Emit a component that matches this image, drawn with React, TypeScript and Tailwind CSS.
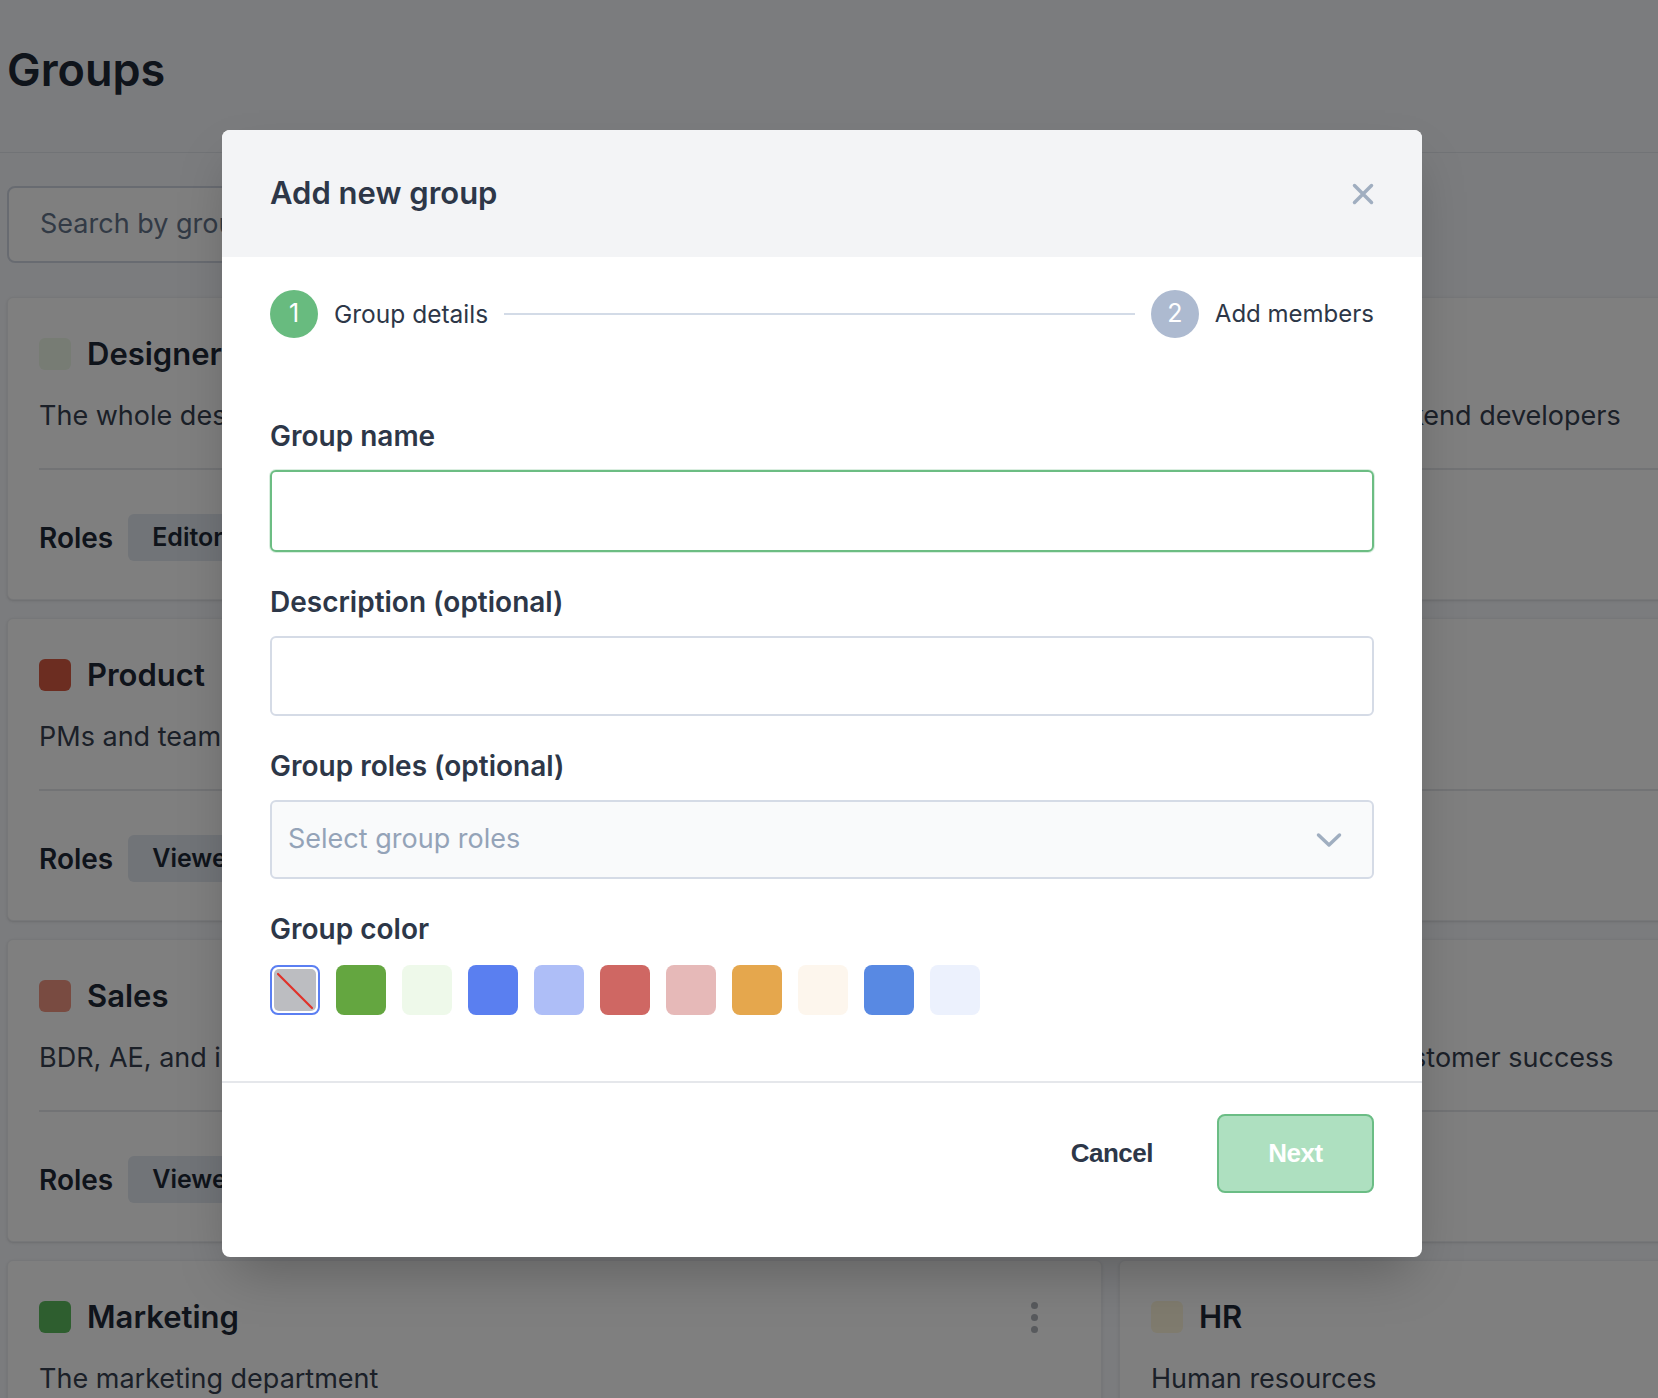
import React from "react";

type Card = {
  title: string;
  desc: string;
  color: string;
  role?: string;
};

const left: Card[] = [
  { title: "Designers", desc: "The whole design team", color: "bg-[#eef9e8]", role: "Editor" },
  { title: "Product", desc: "PMs and team leads", color: "bg-[#d85a42]", role: "Viewer" },
  { title: "Sales", desc: "BDR, AE, and inside sales", color: "bg-[#f29682]", role: "Viewer" },
  { title: "Marketing", desc: "The marketing department", color: "bg-[#5cbc5e]", role: "Viewer" },
];

const right: Card[] = [
  { title: "Engineering", desc: "All frontend and backend developers", color: "bg-[#aebef7]", role: "Admin" },
  { title: "Design ops", desc: "Tooling", color: "bg-[#e5a74d]", role: "Viewer" },
  { title: "Support", desc: "Support staff and customer success", color: "bg-[#5889e3]", role: "Viewer" },
  { title: "HR", desc: "Human resources", color: "bg-[#fff6dc]", role: "Viewer" },
];

function GroupCard({ c }: { c: Card }) {
  return (
    <div className="h-[303px] rounded-md border border-[#eceef2] bg-white pl-[31px] shadow-sm">
      <div className="flex items-center pt-[40px]">
        <div className={`h-[32px] w-[32px] rounded-md ${c.color}`} />
        <div className="ml-[16px] flex-1 text-[31px] font-semibold leading-[32px] text-[#1f2937]">{c.title}</div>
        <div className="mr-[63px] flex flex-col items-center gap-[5px]">
          <span className="h-[7px] w-[7px] rounded-full bg-[#b0b4bb]" />
          <span className="h-[7px] w-[7px] rounded-full bg-[#b0b4bb]" />
          <span className="h-[7px] w-[7px] rounded-full bg-[#b0b4bb]" />
        </div>
      </div>
      <div className="mt-[26px] text-[27px] leading-[40px] text-[#374151]">{c.desc}</div>
      <div className="mr-[31px] mt-[32px] h-[2px] bg-[#e5e7eb]" />
      <div className="mt-[44px] flex items-center">
        <span className="text-[28px] font-semibold text-[#1f2937]">Roles</span>
        <span className="ml-[15px] flex h-[47px] items-center rounded-md bg-[#e2e8f0] px-[24px] text-[25px] font-semibold text-[#1f2937]">
          {c.role}
        </span>
      </div>
    </div>
  );
}

const swatches = [
  "bg-[#64a640]",
  "bg-[#eef9ea]",
  "bg-[#5a7ff0]",
  "bg-[#aebef7]",
  "bg-[#cf6763]",
  "bg-[#e6b9b8]",
  "bg-[#e5a74d]",
  "bg-[#fdf6ed]",
  "bg-[#5889e3]",
  "bg-[#ecf1fd]",
];

export default function App() {
  return (
    <div className="relative h-[1398px] w-[1658px] overflow-hidden bg-[#f6f8fc] font-['Inter',sans-serif]">
      {/* Page header */}
      <div className="h-[153px] border-b border-[#e3e6ec] pl-[7px] pt-[47px]">
        <h1 className="text-[45px] font-semibold leading-none text-[#1f2937]">Groups</h1>
      </div>

      {/* Search */}
      <div className="ml-[7px] mt-[33px] flex h-[77px] w-[560px] items-center rounded-lg border-2 border-[#d1d7e2] bg-white pl-[31px] text-[27px] text-[#64748b]">
        Search by group name
      </div>

      {/* Cards */}
      <div className="ml-[7px] mt-[34px] grid grid-cols-[1095px_1095px] gap-x-[17px] gap-y-[18px]">
        {left.map((c, i) => (
          <React.Fragment key={c.title}>
            <GroupCard c={c} />
            <GroupCard c={right[i]} />
          </React.Fragment>
        ))}
      </div>

      {/* Overlay */}
      <div className="absolute inset-0 bg-black/50" />

      {/* Modal */}
      <div className="absolute inset-0 pl-[222px] pt-[130px]">
        <div className="w-[1200px] overflow-hidden rounded-lg bg-white shadow-2xl">
          <div className="flex h-[127px] items-center justify-between bg-[#f3f4f6] px-[48px]">
            <h2 className="text-[31px] font-semibold text-[#2d3748]">Add new group</h2>
            <svg width="22" height="22" viewBox="0 0 22 22" fill="none" stroke="#a0aec0" strokeWidth="3.5" strokeLinecap="round">
              <path d="M2.5 2.5L19.5 19.5M19.5 2.5L2.5 19.5" />
            </svg>
          </div>

          <div className="px-[48px] pb-[66px]">
            {/* Stepper */}
            <div className="flex items-center pt-[33px]">
              <div className="flex h-[48px] w-[48px] items-center justify-center rounded-full bg-[#68bb7f] text-[25px] text-white">1</div>
              <span className="ml-[16px] text-[24.5px] text-[#2d3748]">Group details</span>
              <div className="mx-[16px] h-[2px] flex-1 bg-[#d3dbe7]" />
              <div className="flex h-[48px] w-[48px] items-center justify-center rounded-full bg-[#adbad0] text-[25px] text-white">2</div>
              <span className="ml-[16px] text-[24px] text-[#2d3748]">Add members</span>
            </div>

            <div className="mt-[78px] text-[28px] font-semibold leading-[40px] text-[#2d3748]">Group name</div>
            <div className="mt-[14px] h-[82px] rounded-md border-2 border-[#6cbd83] bg-white shadow-[0_0_0_1px_rgba(108,189,131,0.25)]" />

            <div className="mt-[30px] text-[28px] font-semibold leading-[40px] text-[#2d3748]">Description (optional)</div>
            <div className="mt-[14px] h-[80px] rounded-md border-2 border-[#d5dbe6] bg-white" />

            <div className="mt-[30px] text-[28px] font-semibold leading-[40px] text-[#2d3748]">Group roles (optional)</div>
            <div className="mt-[14px] flex h-[79px] items-center justify-between rounded-md border-2 border-[#d5dbe6] bg-[#f9fafb] pl-[16px] pr-[30px]">
              <span className="text-[27px] text-[#94a3b8]">Select group roles</span>
              <svg width="26" height="16" viewBox="0 0 26 16" fill="none" stroke="#a0aec0" strokeWidth="3.5" strokeLinecap="round" strokeLinejoin="round">
                <path d="M2.5 3L13 13L23.5 3" />
              </svg>
            </div>

            <div className="mt-[30px] text-[28px] font-semibold leading-[40px] text-[#2d3748]">Group color</div>
            <div className="mt-[16px] flex gap-[16px]">
              <div className="relative h-[50px] w-[50px] rounded-[8px] border-2 border-[#5b7ff2] p-[2px]">
                <div className="relative h-full w-full overflow-hidden rounded-[5px] bg-[#bcbdc1]">
                  <svg className="absolute inset-0" width="42" height="42" viewBox="0 0 42 42">
                    <path d="M4 5L38 39" stroke="#e0322a" strokeWidth="2.2" strokeLinecap="round" />
                  </svg>
                </div>
              </div>
              {swatches.map((s) => (
                <div key={s} className={`h-[50px] w-[50px] rounded-[8px] ${s}`} />
              ))}
            </div>
          </div>

          <div className="flex items-center justify-end border-t-2 border-[#e5e7eb] px-[48px] pb-[64px] pt-[31px]">
            <button className="mr-[64px] font-['Liberation_Sans',sans-serif] text-[26px] font-bold tracking-[-0.5px] text-[#2d3748]">
              Cancel
            </button>
            <button className="h-[79px] w-[157px] rounded-lg border-2 border-[#6bbd85] bg-[#aee0c0] font-['Liberation_Sans',sans-serif] text-[26px] font-bold tracking-[-0.5px] text-white">
              Next
            </button>
          </div>
        </div>
      </div>
    </div>
  );
}
